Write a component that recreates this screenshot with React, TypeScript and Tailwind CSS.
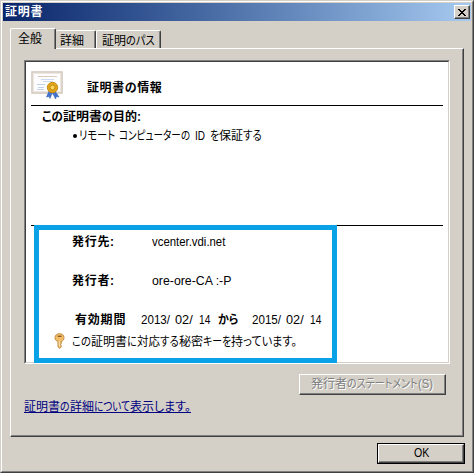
import React, { useLayoutEffect, useRef, useState } from "react";

const font =
  "font-['Liberation_Sans','Noto_Sans_CJK_JP',sans-serif] [font-feature-settings:'palt'] text-[12px] leading-[16px] whitespace-nowrap";

type RunData = [text: string, width: number];

/** A piece of text condensed or widened to a fixed advance, like a narrow UI face. */
function Run({ text, width }: { text: string; width: number }) {
  const ref = useRef<HTMLSpanElement>(null);
  const [scale, setScale] = useState(1);
  useLayoutEffect(() => {
    if (ref.current) setScale(width / ref.current.offsetWidth);
  }, [text, width]);
  return (
    <span className="inline-block align-top" style={{ width }}>
      <span ref={ref} className="inline-block origin-left whitespace-pre" style={{ transform: `scaleX(${scale})` }}>
        {text}
      </span>
    </span>
  );
}

function Runs({ items }: { items: RunData[] }) {
  return (
    <span className="flex">
      {items.map(([text, width], i) => (
        <Run key={i} text={text} width={width} />
      ))}
    </span>
  );
}

function CertificateIcon() {
  return (
    <svg width="34" height="30" viewBox="0 0 34 30" className="block">
      <rect x="1" y="2" width="30" height="21" fill="#fff" stroke="#d3cabd" strokeWidth="1.6" />
      <rect x="2.500" y="3.500" width="27" height="18" fill="#fdfdff" stroke="#eee7df" />
      <path d="M7 6.500h19" stroke="#d9ccb9" />
      <path d="M10 9.500h13M12 11.500h10" stroke="#cbd8f0" />
      <path d="M6 14.500h8M7 17.500h6M6 19.500h7" stroke="#c0d0ee" />
      <path d="M18 21l-2.500 6 2.500-.5 1 2 2.500-6zM24 21l4 6-2.500-.5-1 2.500-3-6z" fill="#4474cf" stroke="#2b58ad" strokeWidth=".5" />
      <circle cx="21.500" cy="17.500" r="5.200" fill="#e0a518" stroke="#c48b15" />
      <circle cx="21.500" cy="17.500" r="2.500" fill="#f8d55a" stroke="#c48b15" />
    </svg>
  );
}

function KeyIcon() {
  return (
    <svg width="12" height="16" viewBox="0 0 12 16" className="block">
      <path
        d="M5.500.7C2.800.7 1 2.300 1 4.700c0 2 1.200 3.200 3 3.700v5.500l1.500 1.400L7.200 14v-1.300l-.8-.8.8-1V8.400C9 7.900 10 6.600 10 4.700 10 2.300 8.200.7 5.500.7z"
        fill="#f1bd68"
        stroke="#c48b42"
      />
      <path d="M3.700 3.300h3.800" stroke="#83561e" strokeWidth="1.300" />
      <path d="M5.400 8v5.500" stroke="#fce3b0" />
    </svg>
  );
}

function Field({ label, value, width }: { label: string; value: string; width: number }) {
  return (
    <div className="flex h-[39px] pl-[46px]">
      <span className="w-[80px] font-bold tracking-[0.7px]">{label}</span>
      <Run text={value} width={width} />
    </div>
  );
}

function DateText({ year }: { year: string }) {
  return <Runs items={[[`${year}/`, 29], [" ", 5], ["02/", 18], [" ", 6], ["14", 11]]} />;
}

export default function App() {
  return (
    <div className={`h-[473px] w-[474px] border border-[#d4d0c8] border-r-[#404040] border-b-[#404040] bg-[#d4d0c8] text-black ${font}`}>
      <div className="flex h-full flex-col border border-white border-r-[#808080] border-b-[#808080] p-px">
        <header className="flex h-[18px] shrink-0 items-center justify-between bg-linear-to-r from-[#0a246a] to-[#a6caf0] pr-[1px] pl-[2px]">
          <span className="text-[12px] font-bold tracking-[0.8px] text-white">証明書</span>
          <button className="flex h-[14px] w-[16px] items-center justify-center border border-white border-r-[#404040] border-b-[#404040] bg-[#d4d0c8] shadow-[inset_-1px_-1px_#808080]">
            <svg width="8" height="7" viewBox="0 0 8 7" shapeRendering="crispEdges">
              <path d="M0 0h2v1h1v1h2V1h1V0h2v1H7v1H6v1H5v1h1v1h1v1h1v1H6V6H5V5H3v1H2v1H0V6h1V5h1V4h1V3H2V2H1V1H0z" />
            </svg>
          </button>
        </header>

        <nav className="flex h-[27px] shrink-0 items-end pl-[7px]">
          <div className="relative z-10 -mb-px h-[21px] w-[46px] rounded-t-[2px] border-t border-r border-l border-white border-r-[#404040] bg-[#d4d0c8] pt-[2px] pl-[7px] shadow-[inset_-1px_0_#808080]">
            全般
          </div>
          <div className="h-[18px] w-[40px] rounded-t-[2px] border-t border-r border-white border-r-[#404040] pt-[2px] pl-[4px] shadow-[inset_-1px_0_#808080]">
            詳細
          </div>
          <div className="h-[18px] w-[65px] rounded-t-[2px] border-t border-r border-l border-white border-r-[#404040] pt-[2px] pl-[5px] shadow-[inset_-1px_0_#808080]">
            <Runs items={[["証明", 24], ["のパス", 29]]} />
          </div>
        </nav>

        <main className="ml-[7px] h-[389px] w-[454px] shrink-0 border border-white border-r-[#404040] border-b-[#404040] pt-[11px] pl-[13px] shadow-[inset_-1px_-1px_#808080]">
          <div className="h-[304px] w-[426px] border border-[#808080] border-r-white border-b-white">
            <section className="relative flex h-full flex-col border border-[#404040] border-r-[#d4d0c8] border-b-[#d4d0c8] bg-white">
              <div className="ml-[5px] flex h-[44px] w-[412px] shrink-0 border-b border-black pt-[8px]">
                <CertificateIcon />
                <h1 className="mt-[10px] ml-[22px] font-bold tracking-[0.6px]">証明書の情報</h1>
              </div>
              <div className="ml-[5px] h-[120px] w-[412px] shrink-0 border-b border-black pt-[3px]">
                <h2 className="pl-[11px] font-bold">
                  <Runs items={[["この", 21], ["証明書", 39], ["の", 11], ["目的:", 28]]} />
                </h2>
                <p className="mt-[3px] flex items-center pl-[42px]">
                  <span className="mr-[2px] size-[4px] rounded-full bg-black" />
                  <Runs
                    items={[
                      ["リモート", 36],
                      [" ", 4],
                      ["コンピューターの", 71],
                      [" ", 5],
                      ["ID", 10],
                      [" ", 5],
                      ["を", 9],
                      ["保証", 24],
                      ["する", 19],
                    ]}
                  />
                </p>
              </div>
              <div className="pt-[8px]">
                <Field label="発行先:" value="vcenter.vdi.net" width={73} />
                <Field label="発行者:" value="ore-ore-CA :-P" width={79} />
                <div className="flex h-[22px] pl-[49px]">
                  <span className="w-[66px] font-bold tracking-[0.8px]">有効期間</span>
                  <span className="w-[77px]">
                    <DateText year="2013" />
                  </span>
                  <span className="w-[34px] font-bold">
                    <Run text="から" width={20} />
                  </span>
                  <DateText year="2015" />
                </div>
                <div className="-mt-px flex pl-[28px]">
                  <KeyIcon />
                  <span className="mt-px ml-[6px]">
                    <Runs
                      items={[
                        ["この", 19],
                        ["証明書", 36],
                        ["に", 10],
                        ["対応", 23],
                        ["する", 19],
                        ["秘密", 24],
                        ["キーを", 28],
                        ["持", 12],
                        ["っています。", 54],
                      ]}
                    />
                  </span>
                </div>
              </div>
              <div className="pointer-events-none absolute top-[163px] left-[8px] h-[138px] w-[303px] border-[5px] border-[#0aa2e6]" />
            </section>
          </div>
          <div className="mt-[10px] ml-[275px] h-[21px] w-[147px] border border-white border-r-[#404040] border-b-[#404040] pt-[1px] pl-[11px] text-[#808080] shadow-[inset_-1px_-1px_#808080] [text-shadow:1px_1px_white]">
            <Runs items={[["発行者", 36], ["のステートメント", 71], ["(S)", 15]]} />
          </div>
          <a className="mt-[4px] block h-[14px] w-[167px] border-b border-[#000080] text-[#000080]">
            <Runs items={[["証明書", 36], ["の", 10], ["詳細", 24], ["について", 36], ["表示", 24], ["します。", 37]]} />
          </a>
        </main>

        <button className="mt-[6px] ml-[374px] h-[21px] w-[88px] shrink-0 border border-black">
          <span className="block h-full border border-white border-r-[#404040] border-b-[#404040] leading-[17px] shadow-[inset_-1px_-1px_#808080]">
            <Run text="OK" width={15} />
          </span>
        </button>
      </div>
    </div>
  );
}
